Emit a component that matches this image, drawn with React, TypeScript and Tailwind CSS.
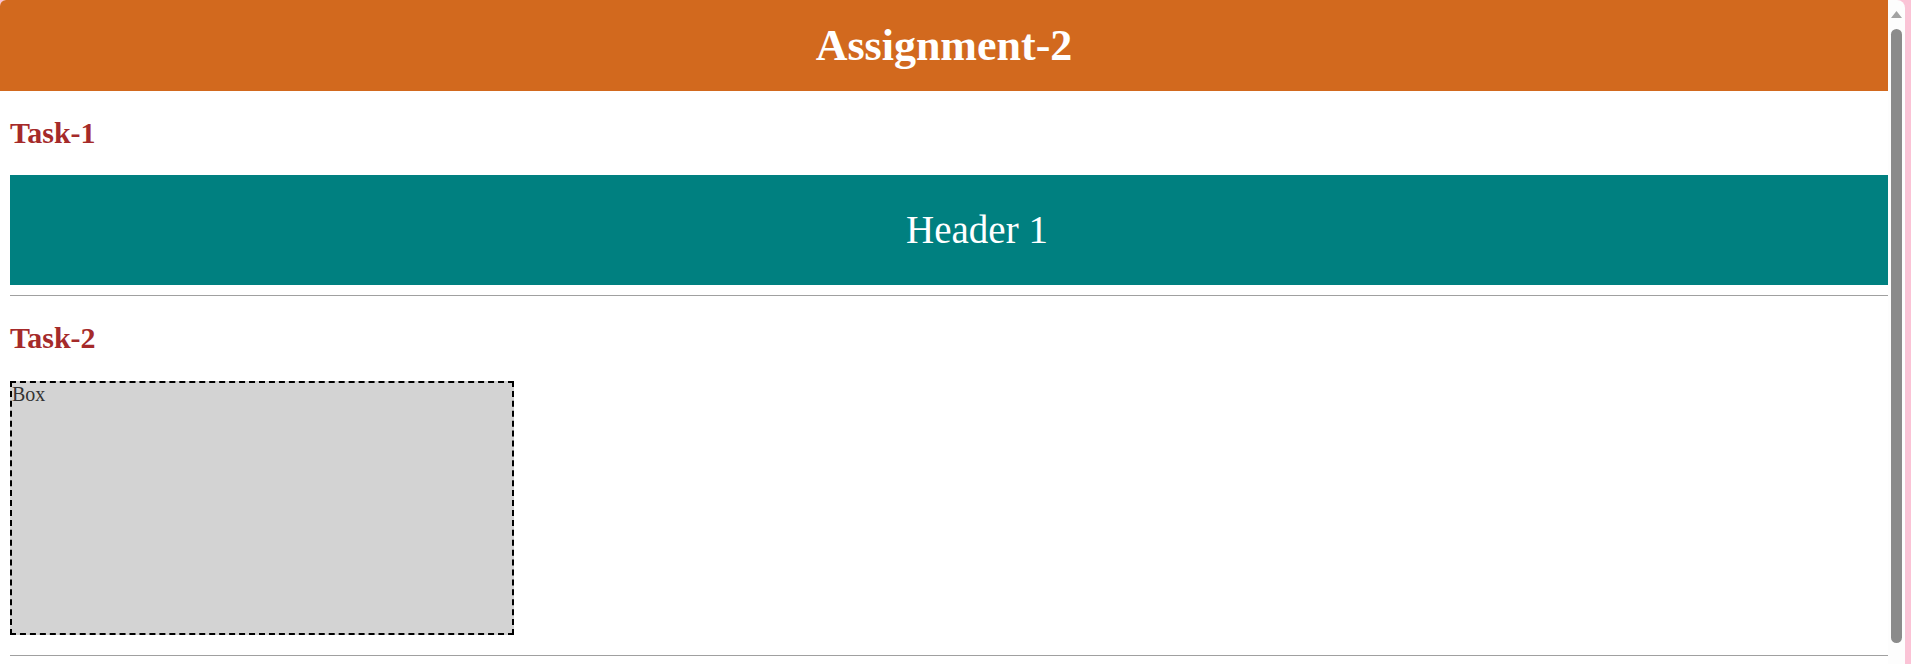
import React from 'react';

const serif = { fontFamily: '"Liberation Serif", "Times New Roman", serif' };

const Section: React.FC<{ title: string; children: React.ReactNode }> = ({ title, children }) => (
  <>
    <h2 className="mt-[26px] text-[30px] leading-[32px] font-bold text-[#a52a2a]">{title}</h2>
    {children}
  </>
);

export default function App() {
  return (
    <div className="flex h-[664px] w-full overflow-hidden bg-[#fbc3d6]" style={serif}>
      {/* page */}
      <div className="flex-1 min-w-0 flex flex-col bg-white rounded-tl-[6px] overflow-hidden">
        <header className="h-[91px] shrink-0 flex items-center justify-center bg-[#d2691e]">
          <h1 className="text-[44px] font-bold text-white">Assignment-2</h1>
        </header>

        <main className="pl-[10px] flex flex-col">
          <Section title="Task-1">
            <div className="mt-[26px] h-[110px] flex items-center justify-center pl-[56px] bg-[#008080]">
              <span className="text-[39px] text-white">Header 1</span>
            </div>
          </Section>
          <hr className="mt-[10px] border-0 h-px bg-[#a0a0a0]" />

          <Section title="Task-2">
            <div className="mt-[27px] w-[504px] h-[254px] border-2 border-dashed border-black bg-[#d3d3d3] text-[20px] leading-[22px] text-[#333]">
              Box
            </div>
          </Section>
          <hr className="mt-[20px] border-0 h-px bg-[#a0a0a0]" />
        </main>
      </div>

      {/* scrollbar */}
      <div className="w-[17px] shrink-0 flex flex-col items-center bg-[#fdfdfd] rounded-tr-[8px]">
        <svg width="11" height="8" viewBox="0 0 11 8" className="mt-[10px]">
          <path d="M0 8 L5.5 1 L11 8 Z" fill="#a3a3a3" />
        </svg>
        <div className="mt-[11px] w-[11px] h-[614px] rounded-full bg-[#8b8b8b]" />
      </div>
      <div className="w-[6px] shrink-0" />
    </div>
  );
}
